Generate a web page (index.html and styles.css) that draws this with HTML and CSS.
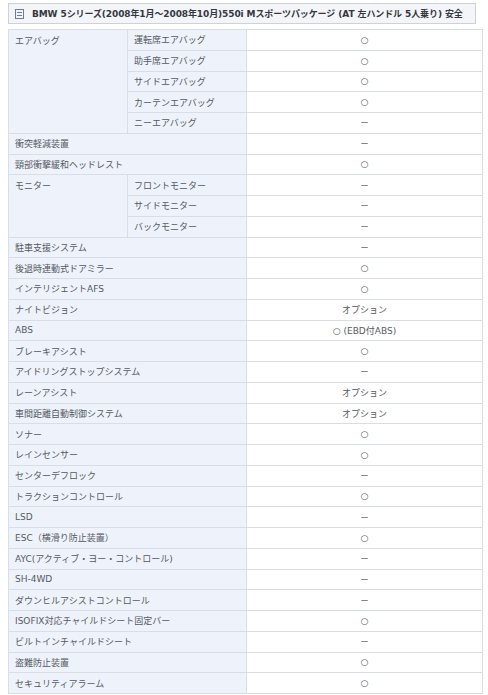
FILE: index.html
```html
<!DOCTYPE html>
<html lang="ja">
<head>
<meta charset="utf-8">
<link rel="stylesheet" href="styles.css">
</head>
<body>
<div class="page">
  <div class="title">
    <svg class="ico" width="9" height="10" viewBox="0 0 9 10"><rect x="0.5" y="0.5" width="8" height="9" fill="none" stroke="#6d7d99"/><line x1="2" y1="3.5" x2="7" y2="3.5" stroke="#6d7d99"/><line x1="2" y1="6.5" x2="7" y2="6.5" stroke="#6d7d99"/></svg>
    <span>BMW 5シリーズ(2008年1月～2008年10月)550i Mスポーツパッケージ (AT 左ハンドル 5人乗り) 安全</span>
  </div>
  <table class="spec">
    <colgroup><col class="c1"><col class="c2"><col class="c3"></colgroup>
    <tbody>
      <tr><th rowspan="5" class="grp">エアバッグ</th><th>運転席エアバッグ</th><td>○</td></tr>
      <tr><th>助手席エアバッグ</th><td>○</td></tr>
      <tr><th>サイドエアバッグ</th><td>○</td></tr>
      <tr><th>カーテンエアバッグ</th><td>○</td></tr>
      <tr><th>ニーエアバッグ</th><td class="d">－</td></tr>
      <tr><th colspan="2">衝突軽減装置</th><td class="d">－</td></tr>
      <tr><th colspan="2">頸部衝撃緩和ヘッドレスト</th><td>○</td></tr>
      <tr><th rowspan="3" class="grp">モニター</th><th>フロントモニター</th><td class="d">－</td></tr>
      <tr><th>サイドモニター</th><td class="d">－</td></tr>
      <tr><th>バックモニター</th><td class="d">－</td></tr>
      <tr><th colspan="2">駐車支援システム</th><td class="d">－</td></tr>
      <tr><th colspan="2">後退時連動式ドアミラー</th><td>○</td></tr>
      <tr><th colspan="2">インテリジェントAFS</th><td>○</td></tr>
      <tr><th colspan="2">ナイトビジョン</th><td>オプション</td></tr>
      <tr><th colspan="2">ABS</th><td>○ (EBD付ABS)</td></tr>
      <tr><th colspan="2">ブレーキアシスト</th><td>○</td></tr>
      <tr><th colspan="2">アイドリングストップシステム</th><td class="d">－</td></tr>
      <tr><th colspan="2">レーンアシスト</th><td>オプション</td></tr>
      <tr><th colspan="2">車間距離自動制御システム</th><td>オプション</td></tr>
      <tr><th colspan="2">ソナー</th><td>○</td></tr>
      <tr><th colspan="2">レインセンサー</th><td>○</td></tr>
      <tr><th colspan="2">センターデフロック</th><td class="d">－</td></tr>
      <tr><th colspan="2">トラクションコントロール</th><td>○</td></tr>
      <tr><th colspan="2">LSD</th><td class="d">－</td></tr>
      <tr><th colspan="2">ESC（横滑り防止装置）</th><td>○</td></tr>
      <tr><th colspan="2">AYC(アクティブ・ヨー・コントロール)</th><td class="d">－</td></tr>
      <tr><th colspan="2">SH-4WD</th><td class="d">－</td></tr>
      <tr><th colspan="2">ダウンヒルアシストコントロール</th><td class="d">－</td></tr>
      <tr><th colspan="2">ISOFIX対応チャイルドシート固定バー</th><td>○</td></tr>
      <tr><th colspan="2">ビルトインチャイルドシート</th><td class="d">－</td></tr>
      <tr><th colspan="2">盗難防止装置</th><td>○</td></tr>
      <tr><th colspan="2">セキュリティアラーム</th><td>○</td></tr>
    </tbody>
  </table>
</div>
</body>
</html>
```
FILE: styles.css
```css
html, body {
  margin: 0;
  padding: 0;
  background: #ffffff;
}
body {
  font-family: "DejaVu Sans", "Noto Sans CJK JP", sans-serif;
  font-size: 9px;
  color: #555a62;
}
.page {
  padding: 3px 6px 0 8px;
}
.title {
  width: 468px;
  box-sizing: border-box;
  height: 21px;
  border: 1px solid #cdd2da;
  background: #f3f5f9;
  display: flex;
  align-items: center;
  gap: 8px;
  padding-left: 6px;
  font-weight: bold;
  color: #333840;
  letter-spacing: -0.1px;
}
.ico {
  flex: none;
}
.spec {
  margin-top: 5px;
  width: 475px;
  border-collapse: collapse;
  table-layout: fixed;
}
.c1 { width: 119px; }
.c2 { width: 119px; }
.spec th, .spec td {
  border: 1px solid #d9dde4;
  height: 19.75px;
  padding: 0 0 0 6px;
  font-weight: normal;
  text-align: left;
  vertical-align: middle;
  white-space: nowrap;
}
.spec th {
  background: #eef2fa;
}
.spec th.grp {
  vertical-align: top;
  padding-top: 4px;
}
.spec td {
  text-align: center;
  padding: 0;
  background: #ffffff;
}
.spec td.d {
  color: #444;
}
```
